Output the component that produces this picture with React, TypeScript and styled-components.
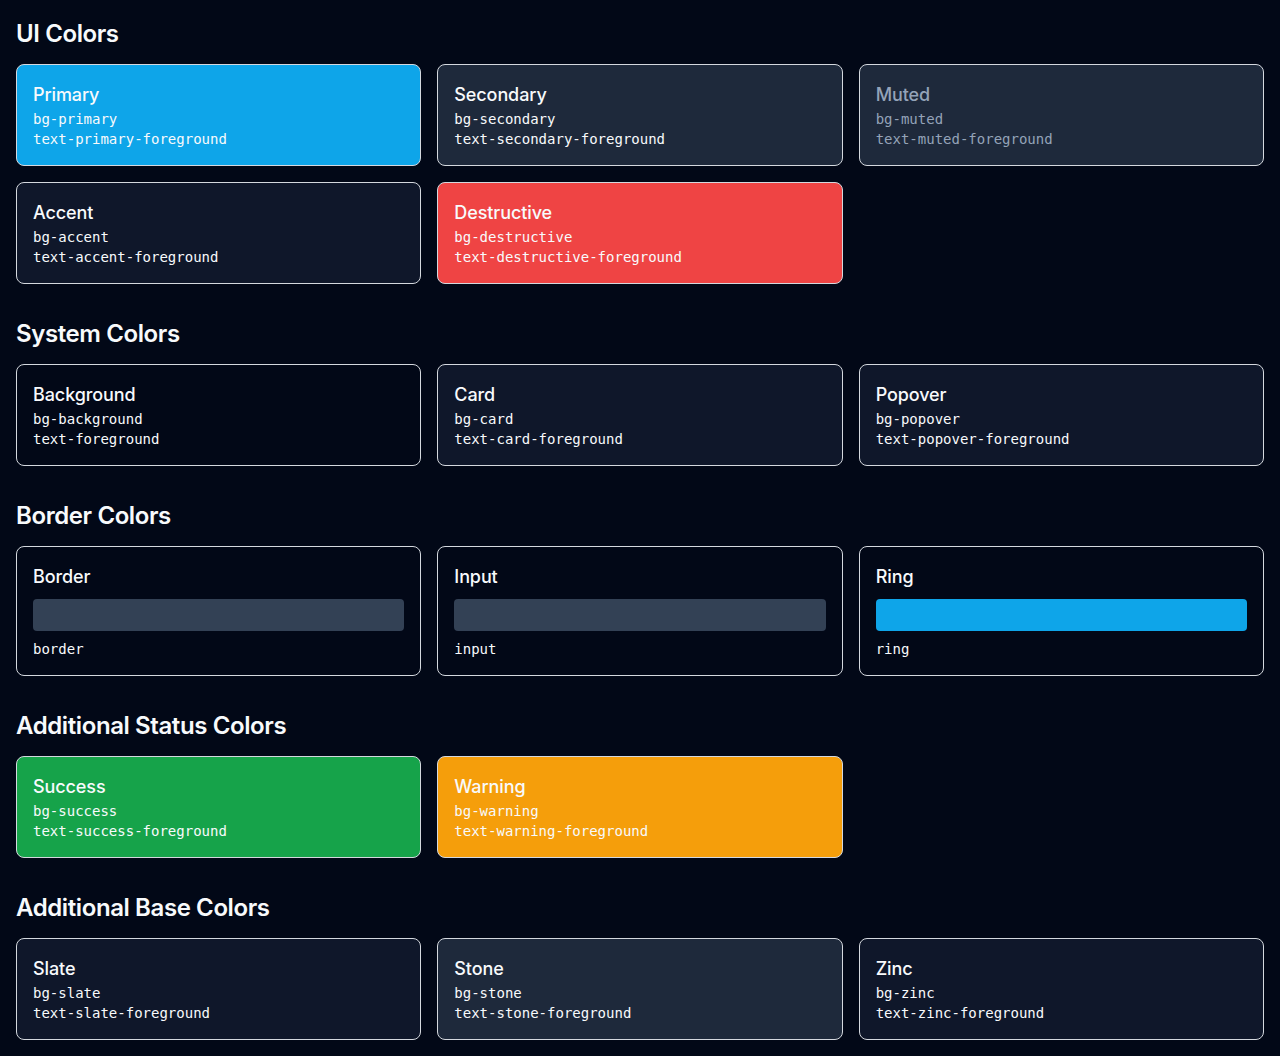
import React from "react";
import styled, { createGlobalStyle } from "styled-components";

const Global = createGlobalStyle`
  html, body { margin: 0; padding: 0; background: #020817; }
  body { font-family: Inter, "Noto Sans", sans-serif; color: #f8fafc; }
`;

const Page = styled.div`
  padding: 16px;
  display: flex;
  flex-direction: column;
  gap: 32px;
  background: #020817;
  min-height: 1056px;
  box-sizing: border-box;
`;

const Section = styled.section`
  display: flex;
  flex-direction: column;
  gap: 14px;
`;

const Heading = styled.h2`
  margin: 0;
  padding-top: 2px;
  font-size: 24px;
  line-height: 32px;
  font-weight: 600;
  color: #f8fafc;
  letter-spacing: -0.4px;
`;

const Grid = styled.div`
  display: grid;
  grid-template-columns: repeat(3, 1fr);
  gap: 16px;
`;

const Card = styled.div<{ $bg: string; $fg: string }>`
  background: ${(p) => p.$bg};
  color: ${(p) => p.$fg};
  border: 1px solid #d4d8de;
  border-radius: 8px;
  padding: 16px;
  display: flex;
  flex-direction: column;
`;

const Title = styled.div`
  font-size: 18px;
  line-height: 28px;
  font-weight: 500;
  letter-spacing: -0.1px;
`;

const Mono = styled.div`
  font-family: "DejaVu Sans Mono", monospace;
  font-size: 14px;
  line-height: 20px;
`;

const Swatch = styled.div<{ $color: string }>`
  height: 32px;
  border-radius: 4px;
  background: ${(p) => p.$color};
  margin: 8px 0;
`;

type Item = { name: string; bg: string; fg: string; a: string; b: string };

const ColorCard = ({ item }: { item: Item }) => (
  <Card $bg={item.bg} $fg={item.fg}>
    <Title>{item.name}</Title>
    <Mono>{item.a}</Mono>
    <Mono>{item.b}</Mono>
  </Card>
);

const mk = (name: string, bg: string, fg = "#f8fafc"): Item => {
  const k = name.toLowerCase();
  return { name, bg, fg, a: `bg-${k}`, b: `text-${k}-foreground` };
};

const ui: Item[] = [
  mk("Primary", "#0ea5e9"),
  mk("Secondary", "#1e293b"),
  mk("Muted", "#1e293b", "#94a3b8"),
  mk("Accent", "#0f172a"),
  mk("Destructive", "#ef4444"),
];

const system: Item[] = [
  { name: "Background", bg: "#020817", fg: "#f8fafc", a: "bg-background", b: "text-foreground" },
  mk("Card", "#0f172a"),
  mk("Popover", "#0f172a"),
];

const borders = [
  { name: "Border", color: "#334155" },
  { name: "Input", color: "#334155" },
  { name: "Ring", color: "#0ea5e9" },
];

const status: Item[] = [mk("Success", "#16a34a"), mk("Warning", "#f59e0b")];

const base: Item[] = [mk("Slate", "#0f172a"), mk("Stone", "#1e293b"), mk("Zinc", "#0f172a")];

export default function App() {
  return (
    <>
      <Global />
      <Page>
        <Section>
          <Heading>UI Colors</Heading>
          <Grid>
            {ui.map((i) => (
              <ColorCard key={i.name} item={i} />
            ))}
          </Grid>
        </Section>
        <Section>
          <Heading>System Colors</Heading>
          <Grid>
            {system.map((i) => (
              <ColorCard key={i.name} item={i} />
            ))}
          </Grid>
        </Section>
        <Section>
          <Heading>Border Colors</Heading>
          <Grid>
            {borders.map((b) => (
              <Card key={b.name} $bg="#020817" $fg="#f8fafc">
                <Title>{b.name}</Title>
                <Swatch $color={b.color} />
                <Mono>{b.name.toLowerCase()}</Mono>
              </Card>
            ))}
          </Grid>
        </Section>
        <Section>
          <Heading>Additional Status Colors</Heading>
          <Grid>
            {status.map((i) => (
              <ColorCard key={i.name} item={i} />
            ))}
          </Grid>
        </Section>
        <Section>
          <Heading>Additional Base Colors</Heading>
          <Grid>
            {base.map((i) => (
              <ColorCard key={i.name} item={i} />
            ))}
          </Grid>
        </Section>
      </Page>
    </>
  );
}
